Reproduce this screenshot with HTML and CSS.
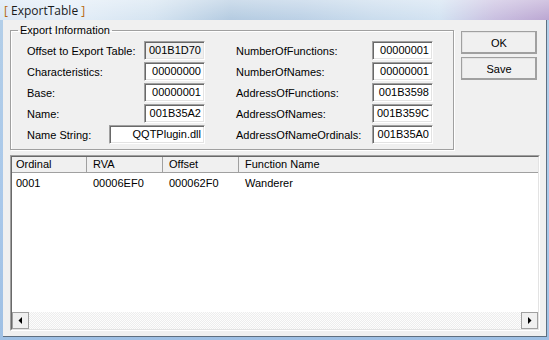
FILE: index.html
```html
<!DOCTYPE html>
<html>
<head>
<meta charset="utf-8">
<link rel="stylesheet" href="styles.css">
</head>
<body>
<div class="window">
  <div class="titlebar"><span class="br">[</span> ExportTable <span class="br">]</span></div>
  <div class="client">
    <div class="top">
      <fieldset class="group">
        <legend>Export Information</legend>
        <div class="cols">
          <div class="col col-left">
            <div class="row"><span>Offset to Export Table:</span><div class="edit ro">001B1D70</div></div>
            <div class="row"><span>Characteristics:</span><div class="edit">00000000</div></div>
            <div class="row"><span>Base:</span><div class="edit">00000001</div></div>
            <div class="row"><span>Name:</span><div class="edit">001B35A2</div></div>
            <div class="row"><span>Name String:</span><div class="edit wide">QQTPlugin.dll</div></div>
          </div>
          <div class="col col-right">
            <div class="row"><span>NumberOfFunctions:</span><div class="edit">00000001</div></div>
            <div class="row"><span>NumberOfNames:</span><div class="edit">00000001</div></div>
            <div class="row"><span>AddressOfFunctions:</span><div class="edit">001B3598</div></div>
            <div class="row"><span>AddressOfNames:</span><div class="edit">001B359C</div></div>
            <div class="row"><span>AddressOfNameOrdinals:</span><div class="edit">001B35A0</div></div>
          </div>
        </div>
      </fieldset>
      <div class="buttons">
        <button class="btn">OK</button>
        <button class="btn">Save</button>
      </div>
    </div>
    <div class="listview">
      <div class="lv-inner">
        <div class="lv-head grid">
          <div class="cell c1">Ordinal</div>
          <div class="cell">RVA</div>
          <div class="cell">Offset</div>
          <div class="cell last">Function Name</div>
        </div>
        <div class="lv-body">
          <div class="lv-row grid">
            <div class="cell c1">0001</div>
            <div class="cell">00006EF0</div>
            <div class="cell">000062F0</div>
            <div class="cell last">Wanderer</div>
          </div>
        </div>
        <div class="hscroll">
          <div class="sbtn"><svg width="5" height="8" viewBox="0 0 5 8"><polygon points="4,0 4,7 0.5,3.5" fill="#000"/></svg></div>
          <div class="track"></div>
          <div class="sbtn"><svg width="5" height="8" viewBox="0 0 5 8"><polygon points="1,0 1,7 4.5,3.5" fill="#000"/></svg></div>
        </div>
      </div>
    </div>
  </div>
</div>
</body>
</html>
```

FILE: styles.css
```css
html, body {
  margin: 0;
  padding: 0;
}
body {
  width: 549px;
  height: 340px;
  overflow: hidden;
  font-family: "Liberation Sans", Arial, sans-serif;
  font-size: 11px;
  color: #000;
}
.window {
  width: 549px;
  height: 340px;
  display: flex;
  flex-direction: column;
  background: linear-gradient(180deg, #b4cfe8 0%, #a9c8ea 60%, #9fc0e4 100%);
}
.titlebar {
  height: 20px;
  line-height: 22px;
  padding-left: 4px;
  font-family: "Open Sans", "Noto Sans", sans-serif;
  font-size: 12px;
  color: #1a1a1a;
  white-space: pre;
  background:
    linear-gradient(180deg, rgba(255,255,255,0.35) 0%, rgba(255,255,255,0) 100%),
    linear-gradient(90deg, #d9e7f4 0%, #e4eef8 12%, #d5e4f1 28%, #b4cbe1 42%, #bcd1e6 55%, #cadced 68%, #d3e3f2 80%, #c9bfe0 90%, #bba6d2 100%);
}
.br {
  color: #b8680f;
}
.client {
  flex: 1;
  margin: 0 2px 3px 3px;
  background: #f0f0f0;
  border-right: 1px solid #5f6f80;
  border-bottom: 1px solid #5f6f80;
  padding: 4px 7px 5px 7px;
  display: flex;
  flex-direction: column;
  gap: 5px;
}
.top {
  display: flex;
  gap: 7px;
  height: 126px;
}
.group {
  box-sizing: border-box;
  width: 444px;
  height: 126px;
  margin: 0;
  padding: 4px 0 0 16px;
  border: 1px solid #a0a0a0;
  box-shadow: 1px 1px 0 #fff, inset 1px 1px 0 #fff;
  min-inline-size: 0;
}
.group legend {
  padding: 0 2px;
  margin-left: -9px;
  line-height: 13px;
}
.cols {
  display: flex;
  gap: 31px;
}
.col {
  display: flex;
  flex-direction: column;
  gap: 2px;
}
.col-left { width: 178px; }
.col-right { width: 197px; }
.row {
  height: 19px;
  display: flex;
  justify-content: space-between;
  align-items: center;
}
.edit {
  box-sizing: border-box;
  width: 61px;
  height: 19px;
  background: #fff;
  border: 1px solid;
  border-color: #a0a0a0 #fff #fff #a0a0a0;
  box-shadow: inset 1px 1px 0 #696969, inset -1px -1px 0 #e3e3e3;
  text-align: right;
  padding-right: 3px;
  line-height: 17px;
}
.edit.ro { background: #f0f0f0; }
.edit.wide { width: 96px; }
.buttons {
  display: flex;
  flex-direction: column;
  gap: 3px;
  margin-top: 7px;
}
.btn {
  box-sizing: border-box;
  width: 76px;
  height: 23px;
  margin: 0;
  padding: 0;
  background: #f0f0f0;
  border: 1px solid;
  border-color: #fff #696969 #696969 #fff;
  box-shadow: inset -1px -1px 0 #a0a0a0, inset 1px 1px 0 #e3e3e3, 0 0 0 0 #a0a0a0;
  outline: 1px solid #a0a0a0;
  outline-offset: -1px;
  font-family: "Liberation Sans", Arial, sans-serif;
  font-size: 11px;
  color: #000;
}
.listview {
  box-sizing: border-box;
  width: 530px;
  height: 176px;
  border: 1px solid;
  border-color: #a0a0a0 #fff #fff #a0a0a0;
  display: flex;
}
.lv-inner {
  flex: 1;
  border: 1px solid;
  border-color: #696969 #e3e3e3 #e3e3e3 #696969;
  display: flex;
  flex-direction: column;
  background: #fff;
}
.grid {
  display: grid;
  grid-template-columns: 75px 76px 76px 1fr;
}
.lv-head {
  box-sizing: border-box;
  height: 16px;
  background: #f0f0f0;
  border-bottom: 1px solid #a0a0a0;
  line-height: 15px;
}
.lv-head .cell {
  border-right: 1px solid #a0a0a0;
}
.lv-head .cell.last { border-right: none; }
.cell {
  padding-left: 6px;
  white-space: nowrap;
}
.cell.c1 { padding-left: 4px; }
.lv-body {
  flex: 1;
  background: #fff;
}
.lv-row {
  padding-top: 3px;
  line-height: 14px;
}
.hscroll {
  height: 17px;
  display: flex;
}
.sbtn {
  box-sizing: border-box;
  width: 17px;
  height: 17px;
  background: #f0f0f0;
  border: 1px solid #a0a0a0;
  display: flex;
  align-items: center;
  justify-content: center;
}
.track {
  flex: 1;
  background: repeating-conic-gradient(#fdfdfd 0 25%, #ededed 0 50%) 0 0 / 2px 2px;
}
```
